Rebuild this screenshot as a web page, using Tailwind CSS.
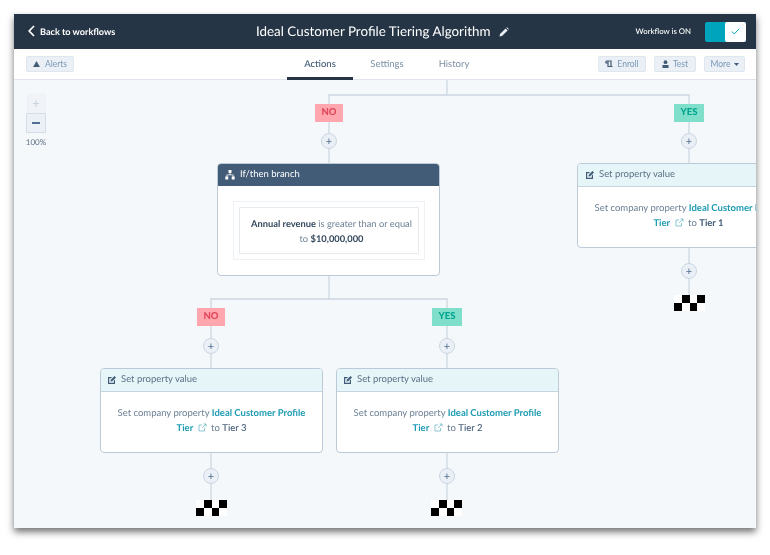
<!DOCTYPE html>
<html lang="en">
<head>
  <meta charset="UTF-8" />
  <title>Ideal Customer Profile Tiering Algorithm</title>
  <script src="https://cdn.jsdelivr.net/npm/@tailwindcss/browser@4"></script>
</head>
<body class="bg-white font-['Lato',sans-serif] overflow-hidden [text-rendering:geometricPrecision]">
  <div class="w-[770px] h-[555px] pt-[14px] pl-[14px]">
    <div class="w-[742px] h-[514px] flex flex-col blur-[0.3px] shadow-[0_4px_7px_0_rgba(0,0,0,0.55)]">

      <!-- Header -->
      <header class="h-[35px] shrink-0 bg-[#253545] flex items-center justify-between pl-[14px] pr-[10px] relative">
        <div class="flex items-center gap-[5px] text-white text-[9.1px] font-bold">
          <svg width="7" height="12" viewBox="0 0 7 12" fill="none" stroke="#fff" stroke-width="1.7"><path d="M6 1 1.2 6 6 11"/></svg>
          <span>Back to workflows</span>
        </div>
        <div class="absolute left-[242px] top-0 h-[35px] flex items-center gap-[9px] text-white text-[13.4px]">
          <span>Ideal Customer Profile Tiering Algorithm</span>
          <svg width="10" height="10" viewBox="0 0 10 10" fill="#e8edf1"><path d="M0.5 9.5 1 7 6.6 1.4 8.6 3.4 3 9zM7.3 0.7 8 0.2 9.8 2 9.3 2.7z"/></svg>
        </div>
        <div class="flex items-center gap-[14px]">
          <span class="text-white text-[7.8px] font-medium">Workflow is ON</span>
          <div class="w-[41px] h-[20px] flex bg-[#00a4bd] rounded-[2px]">
            <div class="w-[20px]"></div>
            <div class="w-[21px] bg-white rounded-[2px] flex items-center justify-center">
              <svg width="9" height="7" viewBox="0 0 9 7" fill="none" stroke="#00a4bd" stroke-width="1"><path d="M0.8 3.5 3.3 6 8.2 0.8"/></svg>
            </div>
          </div>
        </div>
      </header>

      <!-- Toolbar -->
      <div class="h-[31px] shrink-0 bg-white border-b border-[#dfe3eb] flex items-start justify-between pl-[12px] pr-[11px] pt-[7px] relative">
        <button class="h-[16px] w-[48px] flex items-center justify-center gap-[5px] bg-[#eaf0f6] border border-[#dfe6ee] rounded-[2px] text-[#7c98b6] text-[8.5px]">
          <svg width="7" height="6" viewBox="0 0 8 7" fill="#425b76"><path d="M4 0 8 7H0z"/></svg>
          <span>Alerts</span>
        </button>
        <nav class="absolute left-[273px] top-0 h-[31px] flex text-[9.5px] text-[#7c8fa3]">
          <div class="w-[66px] h-[31px] pt-[9px] text-center text-[#425b76] font-medium border-b-[3px] border-[#253545]">Actions</div>
          <div class="w-[68px] pt-[9px] text-center">Settings</div>
          <div class="w-[66px] pt-[9px] text-center">History</div>
        </nav>
        <div class="flex gap-[8px] text-[#7c98b6] text-[8.5px]">
          <button class="h-[16px] w-[48px] flex items-center justify-center gap-[4px] bg-[#eaf0f6] border border-[#dfe6ee] rounded-[2px]">
            <svg width="8" height="8" viewBox="0 0 8 8" fill="none" stroke="#425b76" stroke-width="1.2"><path d="M1 1H6V6.5H7.5M1 1V3H2.5M6 6.5H3V1"/></svg>
            <span>Enroll</span>
          </button>
          <button class="h-[16px] w-[42px] flex items-center justify-center gap-[4px] bg-[#eaf0f6] border border-[#dfe6ee] rounded-[2px]">
            <svg width="7" height="8" viewBox="0 0 7 8" fill="#425b76"><circle cx="3.5" cy="2.2" r="1.9"/><path d="M0.5 5H6.5V8H0.5z"/></svg>
            <span>Test</span>
          </button>
          <button class="h-[16px] w-[41px] flex items-center justify-center gap-[3px] bg-[#eaf0f6] border border-[#dfe6ee] rounded-[2px]">
            <span>More</span>
            <svg width="5" height="3" viewBox="0 0 5 3" fill="#425b76"><path d="M0 0H5L2.5 3z"/></svg>
          </button>
        </div>
      </div>

      <!-- Canvas -->
      <main class="relative flex-1 bg-[#f5f8fa] overflow-hidden">
        <!-- connectors -->
        <svg class="absolute left-0 top-0" width="742" height="434" fill="none" stroke="#cbd6e2" stroke-width="1.3">
          <path d="M433 0V15M315 84V15H675V84"/>
          <path d="M315 196V219M197 288V219H433V288"/>
          <path d="M197 373V421M433 373V421M675 168V216"/>
        </svg>

        <!-- zoom -->
        <div class="absolute left-[12px] top-[14px] w-[20px] flex flex-col items-center">
          <div class="w-[19px] h-[19px] bg-[#f0f3f7] border border-[#eef1f5] flex items-center justify-center text-[#c3ced9] text-[13px] leading-none">+</div>
          <div class="w-[20px] h-[20px] bg-[#eaf0f6] border border-[#d5dee8] flex items-center justify-center">
            <div class="w-[8px] h-[1.5px] bg-[#506e91]"></div>
          </div>
          <div class="mt-[3px] text-[8px] text-[#5d7186] whitespace-nowrap">100%</div>
        </div>

        <!-- tags -->
        <div class="absolute left-[301px] top-[24px] w-[28px] h-[18px] bg-[#ffa6ae] text-[#e0475a] text-[9.5px] font-black flex items-center justify-center">NO</div>
        <div class="absolute left-[660px] top-[24px] w-[30px] h-[18px] bg-[#7fdfcb] text-[#00a38d] text-[9.5px] font-black flex items-center justify-center">YES</div>
        <div class="absolute left-[183px] top-[228px] w-[28px] h-[18px] bg-[#ffa6ae] text-[#e0475a] text-[9.5px] font-black flex items-center justify-center">NO</div>
        <div class="absolute left-[418px] top-[228px] w-[30px] h-[18px] bg-[#7fdfcb] text-[#00a38d] text-[9.5px] font-black flex items-center justify-center">YES</div>

        <!-- add buttons -->
        <div class="absolute left-[307px] top-[53px] w-[16px] h-[16px] rounded-full bg-[#eaf0f6] border border-[#cbd6e2] flex items-center justify-center text-[#506e91] text-[11px] leading-none">+</div>
        <div class="absolute left-[667px] top-[53px] w-[16px] h-[16px] rounded-full bg-[#eaf0f6] border border-[#cbd6e2] flex items-center justify-center text-[#506e91] text-[11px] leading-none">+</div>
        <div class="absolute left-[189px] top-[258px] w-[16px] h-[16px] rounded-full bg-[#eaf0f6] border border-[#cbd6e2] flex items-center justify-center text-[#506e91] text-[11px] leading-none">+</div>
        <div class="absolute left-[425px] top-[258px] w-[16px] h-[16px] rounded-full bg-[#eaf0f6] border border-[#cbd6e2] flex items-center justify-center text-[#506e91] text-[11px] leading-none">+</div>
        <div class="absolute left-[189px] top-[388px] w-[16px] h-[16px] rounded-full bg-[#eaf0f6] border border-[#cbd6e2] flex items-center justify-center text-[#506e91] text-[11px] leading-none">+</div>
        <div class="absolute left-[425px] top-[388px] w-[16px] h-[16px] rounded-full bg-[#eaf0f6] border border-[#cbd6e2] flex items-center justify-center text-[#506e91] text-[11px] leading-none">+</div>
        <div class="absolute left-[667px] top-[183px] w-[16px] h-[16px] rounded-full bg-[#eaf0f6] border border-[#cbd6e2] flex items-center justify-center text-[#506e91] text-[11px] leading-none">+</div>

        <!-- branch card -->
        <div class="absolute left-[203px] top-[83px] w-[223px] h-[113px] bg-white border border-[#bccad8] rounded-[4px] overflow-hidden">
          <div class="h-[22px] bg-[#425b76] flex items-center gap-[5px] pl-[7px] text-white text-[9.5px]">
            <svg width="10" height="10" viewBox="0 0 10 10" fill="#fff"><path d="M3.5 0H6.5V3H5.4V4.5H8.5V6.5H9.7V9.5H6.7V6.5H7.7V5.3H2.3V6.5H3.3V9.5H0.3V6.5H1.5V4.5H4.6V3H3.5z"/></svg>
            <span>If/then branch</span>
          </div>
          <div class="ml-[15px] mt-[15px] w-[192px] h-[59px] border border-[#eef1f5] p-[5px]">
            <div class="h-[47px] border border-[#e6ebf0] flex items-center justify-center text-center text-[9.3px] leading-[15px] text-[#6b7f93] pl-[7px] pr-[2px]">
              <p><b class="text-[#33475b]">Annual revenue</b> is greater than or equal to <b class="text-[#33475b]">$10,000,000</b></p>
            </div>
          </div>
        </div>

        <!-- property cards -->
        <div class="absolute left-[86px] top-[288px] w-[223px] h-[85px] bg-white border border-[#bccad8] rounded-[4px] overflow-hidden">
          <div class="h-[23px] bg-[#e5f5f8] border-b border-[#c3d6df] flex items-center gap-[4px] pl-[6px] text-[#5d7186] text-[9.5px]">
            <svg width="10" height="10" viewBox="0 0 10 10" fill="#425b76"><path d="M1 2H5L4 3.2H2.2V7.8H6.8V5.5L8 4.5V9H1z"/><path d="M3.5 6.5 3.8 4.8 7.5 1 9 2.5 5.2 6.2z"/></svg>
            <span>Set property value</span>
          </div>
          <div class="pt-[14px] px-[12px] text-center text-[9.5px] leading-[15px] text-[#6b7f93]">
            Set company property <b class="text-[#1f9cb3]">Ideal Customer Profile Tier</b>
            <svg class="inline mx-[2px] align-[-1px]" width="9" height="9" viewBox="0 0 9 9" fill="none" stroke="#6fb9c9" stroke-width="0.8"><path d="M6.5 5V8H1V2H4M4 5 8 1M5.5 1H8V3.5"/></svg>
            to <span class="font-medium text-[#425b76]">Tier 3</span>
          </div>
        </div>
        <div class="absolute left-[322px] top-[288px] w-[223px] h-[85px] bg-white border border-[#bccad8] rounded-[4px] overflow-hidden">
          <div class="h-[23px] bg-[#e5f5f8] border-b border-[#c3d6df] flex items-center gap-[4px] pl-[6px] text-[#5d7186] text-[9.5px]">
            <svg width="10" height="10" viewBox="0 0 10 10" fill="#425b76"><path d="M1 2H5L4 3.2H2.2V7.8H6.8V5.5L8 4.5V9H1z"/><path d="M3.5 6.5 3.8 4.8 7.5 1 9 2.5 5.2 6.2z"/></svg>
            <span>Set property value</span>
          </div>
          <div class="pt-[14px] px-[12px] text-center text-[9.5px] leading-[15px] text-[#6b7f93]">
            Set company property <b class="text-[#1f9cb3]">Ideal Customer Profile Tier</b>
            <svg class="inline mx-[2px] align-[-1px]" width="9" height="9" viewBox="0 0 9 9" fill="none" stroke="#6fb9c9" stroke-width="0.8"><path d="M6.5 5V8H1V2H4M4 5 8 1M5.5 1H8V3.5"/></svg>
            to <span class="font-medium text-[#425b76]">Tier 2</span>
          </div>
        </div>
        <div class="absolute left-[563px] top-[83px] w-[223px] h-[85px] bg-white border border-[#bccad8] rounded-[4px] overflow-hidden">
          <div class="h-[23px] bg-[#e5f5f8] border-b border-[#c3d6df] flex items-center gap-[4px] pl-[7px] text-[#5d7186] text-[9.5px]">
            <svg width="10" height="10" viewBox="0 0 10 10" fill="#425b76"><path d="M1 2H5L4 3.2H2.2V7.8H6.8V5.5L8 4.5V9H1z"/><path d="M3.5 6.5 3.8 4.8 7.5 1 9 2.5 5.2 6.2z"/></svg>
            <span>Set property value</span>
          </div>
          <div class="pt-[14px] px-[12px] text-center text-[9.5px] leading-[15px] text-[#6b7f93]">
            Set company property <b class="text-[#1f9cb3]">Ideal Customer Profile Tier</b>
            <svg class="inline mx-[2px] align-[-1px]" width="9" height="9" viewBox="0 0 9 9" fill="none" stroke="#6fb9c9" stroke-width="0.8"><path d="M6.5 5V8H1V2H4M4 5 8 1M5.5 1H8V3.5"/></svg>
            to <b class="text-[#425b76]">Tier 1</b>
          </div>
        </div>

        <!-- end flags -->
        <svg class="absolute left-[182px] top-[420px]" width="31" height="16" viewBox="0 0 4 2" shape-rendering="crispEdges"><path fill="#fff" d="M0 0H1V1H0zM2 0H3V1H2zM1 1H2V2H1zM3 1H4V2H3z"/><path d="M1 0H2V1H1zM3 0H4V1H3zM0 1H1V2H0zM2 1H3V2H2z"/></svg>
        <svg class="absolute left-[417px] top-[420px]" width="31" height="16" viewBox="0 0 4 2" shape-rendering="crispEdges"><path fill="#fff" d="M0 0H1V1H0zM2 0H3V1H2zM1 1H2V2H1zM3 1H4V2H3z"/><path d="M1 0H2V1H1zM3 0H4V1H3zM0 1H1V2H0zM2 1H3V2H2z"/></svg>
        <svg class="absolute left-[660px] top-[215px]" width="31" height="16" viewBox="0 0 4 2" shape-rendering="crispEdges"><path fill="#fff" d="M0 0H1V1H0zM2 0H3V1H2zM1 1H2V2H1zM3 1H4V2H3z"/><path d="M1 0H2V1H1zM3 0H4V1H3zM0 1H1V2H0zM2 1H3V2H2z"/></svg>
      </main>
    </div>
  </div>
</body>
</html>
